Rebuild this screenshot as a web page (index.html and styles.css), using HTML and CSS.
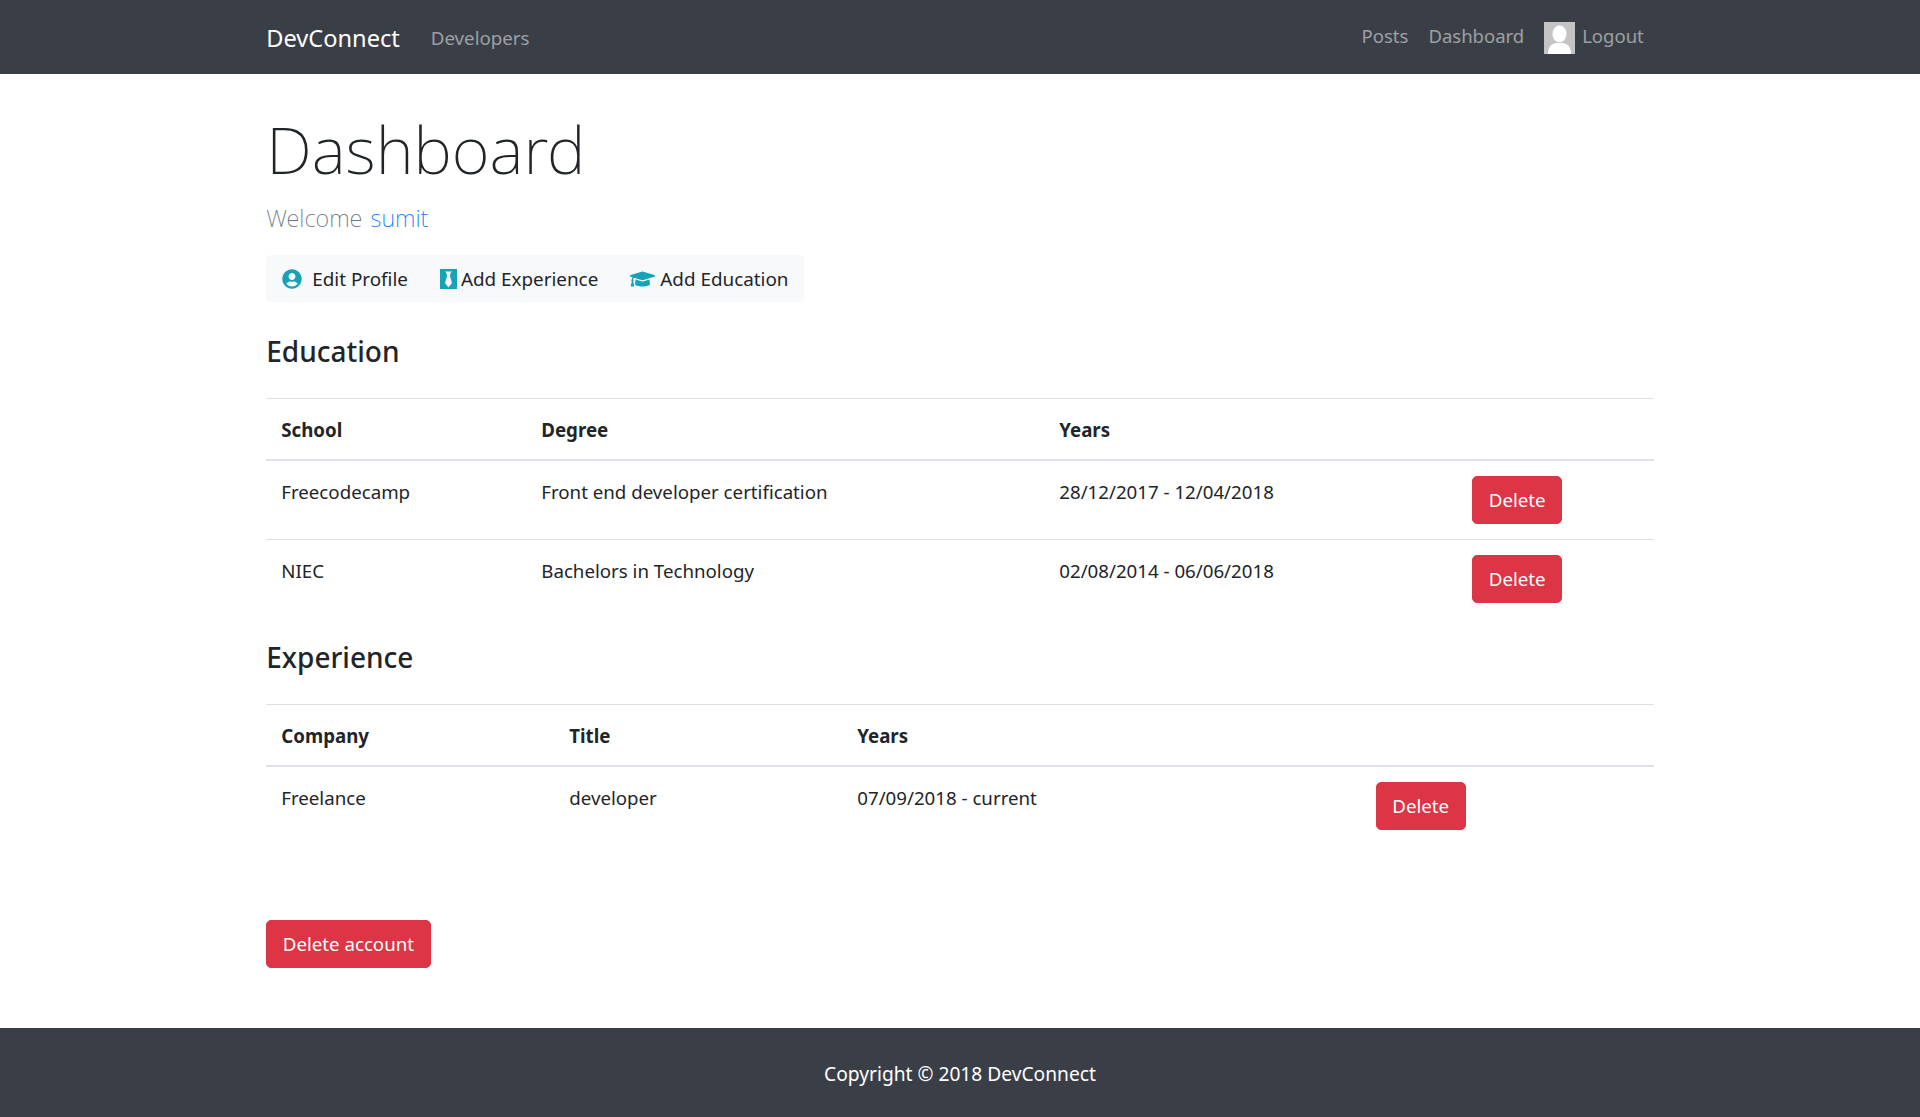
FILE: index.html
```html
<!DOCTYPE html>
<html lang="en">
<head>
    <meta charset="UTF-8">
    <title>DevConnect</title>
    <link rel="stylesheet" href="styles.css">
</head>
<body>
    <nav class="navbar">
        <div class="container navbar-inner">
            <a class="brand" href="#">DevConnect</a>
            <a class="nav-link nav-developers" href="#">Developers</a>
            <div class="nav-right">
                <a class="nav-link" href="#">Posts</a>
                <a class="nav-link" href="#">Dashboard</a>
                <a class="nav-link nav-logout" href="#">
                    <svg class="avatar" viewBox="0 0 31 32">
                        <rect width="31" height="32" fill="#c4c4c4"/>
                        <ellipse cx="15.5" cy="12" rx="7" ry="8.5" fill="#fff"/>
                        <path d="M4 32c0-7 3-10 8-11h7c5 1 8 4 8 11z" fill="#fff"/>
                    </svg>
                    Logout
                </a>
            </div>
        </div>
    </nav>

    <main class="container">
        <h1 class="page-title">Dashboard</h1>
        <p class="lead">Welcome <a href="#">sumit</a></p>

        <div class="btn-group">
            <a class="btn-light" href="#">
                <svg class="icon icon-user" viewBox="0 0 496 512"><path d="M248 8C111 8 0 119 0 256s111 248 248 248 248-111 248-248S385 8 248 8zm0 96c48.600 0 88 39.400 88 88s-39.400 88-88 88-88-39.400-88-88 39.400-88 88-88zm0 344c-58.700 0-111.300-26.600-146.500-68.200 18.800-35.400 55.600-59.800 98.500-59.800 2.400 0 4.800.4 7.100 1.100 13 4.200 26.600 6.900 40.900 6.900s28-2.700 40.900-6.900c2.300-.7 4.700-1.100 7.100-1.100 42.900 0 79.700 24.400 98.500 59.800C359.300 421.400 306.700 448 248 448z"/></svg>
                Edit Profile
            </a>
            <a class="btn-light" href="#">
                <svg class="icon icon-tie" viewBox="0 0 17 20"><path fill-rule="evenodd" d="M0 0h17v20H0zM5 2.500l1.500 1.500L7 7 5 14l3.500 4.500L12 14l-2-7 .5-3L12 2.500z"/></svg>
                Add Experience
            </a>
            <a class="btn-light" href="#">
                <svg class="icon icon-cap" viewBox="0 0 640 512"><path d="M622.300 153.200 343.400 67.500c-15.200-4.670-31.600-4.670-46.800 0L17.700 153.200c-23.600 7.250-23.600 38.400 0 45.600l48.600 14.900c-10.700 13.200-17.200 29.300-17.800 47-9.630 5.520-16.400 15.500-16.400 27.300 0 10.700 5.630 19.700 13.700 25.500L20.300 428.400c-2.200 10 5.400 19.600 15.600 19.600h56.100c10.200 0 17.900-9.500 15.600-19.600L82.100 313.500c8.100-5.800 13.700-14.800 13.700-25.500 0-11.600-6.500-21.300-15.800-26.900.8-15 8.400-28.300 20.600-36.700l196 60.200c9.100 2.800 26.500 6.200 46.800 0l278.900-85.700c23.600-7.200 23.600-38.400 0-45.600zM352.800 315.200c-28.500 8.800-52.800 3.900-65.600 0l-145-44.600L128 384c0 35.300 86 64 192 64s192-28.700 192-64l-14.200-113.400z"/></svg>
                Add Education
            </a>
        </div>

        <h4 class="section-title">Education</h4>
        <table class="table table-education">
            <thead>
                <tr><th>School</th><th>Degree</th><th>Years</th><th></th></tr>
            </thead>
            <tbody>
                <tr>
                    <td>Freecodecamp</td>
                    <td>Front end developer certification</td>
                    <td>28/12/2017 - 12/04/2018</td>
                    <td><button class="btn-danger">Delete</button></td>
                </tr>
                <tr>
                    <td>NIEC</td>
                    <td>Bachelors in Technology</td>
                    <td>02/08/2014 - 06/06/2018</td>
                    <td><button class="btn-danger">Delete</button></td>
                </tr>
            </tbody>
        </table>

        <h4 class="section-title">Experience</h4>
        <table class="table table-experience">
            <thead>
                <tr><th>Company</th><th>Title</th><th>Years</th><th></th></tr>
            </thead>
            <tbody>
                <tr>
                    <td>Freelance</td>
                    <td>developer</td>
                    <td>07/09/2018 - current</td>
                    <td><button class="btn-danger">Delete</button></td>
                </tr>
            </tbody>
        </table>

        <div class="account-actions">
            <button class="btn-danger">Delete account</button>
        </div>
    </main>

    <footer class="footer">Copyright © 2018 DevConnect</footer>
</body>
</html>
```
FILE: styles.css
```css
* {
    box-sizing: border-box;
}
body {
    margin: 0;
    font-family: "Noto Sans", "Open Sans", sans-serif;
    font-size: 18.7px;
    line-height: 30px;
    color: #212529;
    background: #fff;
}
a {
    text-decoration: none;
}
.container {
    width: 1425px;
    margin: 0 auto;
    padding: 0 18.75px;
}
.navbar {
    height: 74px;
    background: #3a3f47;
}
.navbar-inner {
    display: flex;
    align-items: center;
    height: 74px;
    padding-top: 2px;
}
.brand {
    color: #fff;
    font-size: 23.6px;
    margin-right: 31px;
}
.nav-link {
    color: rgba(255,255,255,.5);
}
.nav-right {
    margin-left: auto;
    margin-right: 10px;
    display: flex;
    align-items: center;
    gap: 20px;
    margin-top: -4px;
    font-size: 18.5px;
}
.nav-logout {
    display: flex;
    align-items: center;
    gap: 7px;
}
.avatar {
    width: 31px;
    height: 32px;
    margin-top: 3px;
}
.page-title {
    margin: 33px 0 0;
    font-size: 65px;
    font-weight: 200;
    line-height: 84px;
}
.lead {
    margin: 9px 0 19px;
    font-size: 23.5px;
    font-weight: 200;
    line-height: 36px;
    word-spacing: 2px;
    color: #6c757d;
}
.lead a {
    color: #007bff;
}
.btn-group {
    display: flex;
    width: fit-content;
    height: 47px;
    margin-bottom: 31px;
    background: #f8f9fa;
    border-radius: 5px;
    font-size: 18.85px;
}
.btn-light {
    display: flex;
    align-items: center;
    padding: 0 16px;
    color: #212529;
}
.icon {
    fill: #17a2b8;
    margin-right: 5px;
}
.icon-user {
    width: 20px;
    height: 20px;
    margin-right: 10px;
}
.icon-tie {
    width: 17px;
    height: 20px;
    margin-right: 4px;
}
.icon-cap {
    width: 25px;
    height: 20px;
}
.section-title {
    margin: 20.75px 0 29px;
    font-size: 28px;
    font-weight: 500;
    line-height: 36px;
}
.table {
    width: 100%;
    border-collapse: collapse;
    margin-bottom: 20px;
}
.table th,
.table td {
    padding: 16px 15px 14px;
    text-align: left;
    vertical-align: top;
    border-top: 1px solid #dee2e6;
}
.table td:last-child {
    padding: 15px;
}
.table thead th {
    border-bottom: 2px solid #dee2e6;
    font-weight: 700;
}
.table-education th:nth-child(1) { width: 260px; }
.table-education th:nth-child(2) { width: 518px; }
.table-education th:nth-child(3) { width: 413px; }
.table-experience th:nth-child(1) { width: 288px; }
.table-experience th:nth-child(2) { width: 288px; }
.table-experience th:nth-child(3) { width: 518.5px; }
.btn-danger {
    height: 48px;
    padding: 0 15.5px;
    font: inherit;
    color: #fff;
    background: #dc3545;
    border: 1px solid #dc3545;
    border-radius: 5px;
}
.account-actions {
    margin-top: 75px;
    margin-bottom: 60px;
}
.footer {
    height: 90px;
    padding-top: 2px;
    background: #3a3f47;
    color: #fff;
    font-size: 19.2px;
    display: flex;
    align-items: center;
    justify-content: center;
}
```
